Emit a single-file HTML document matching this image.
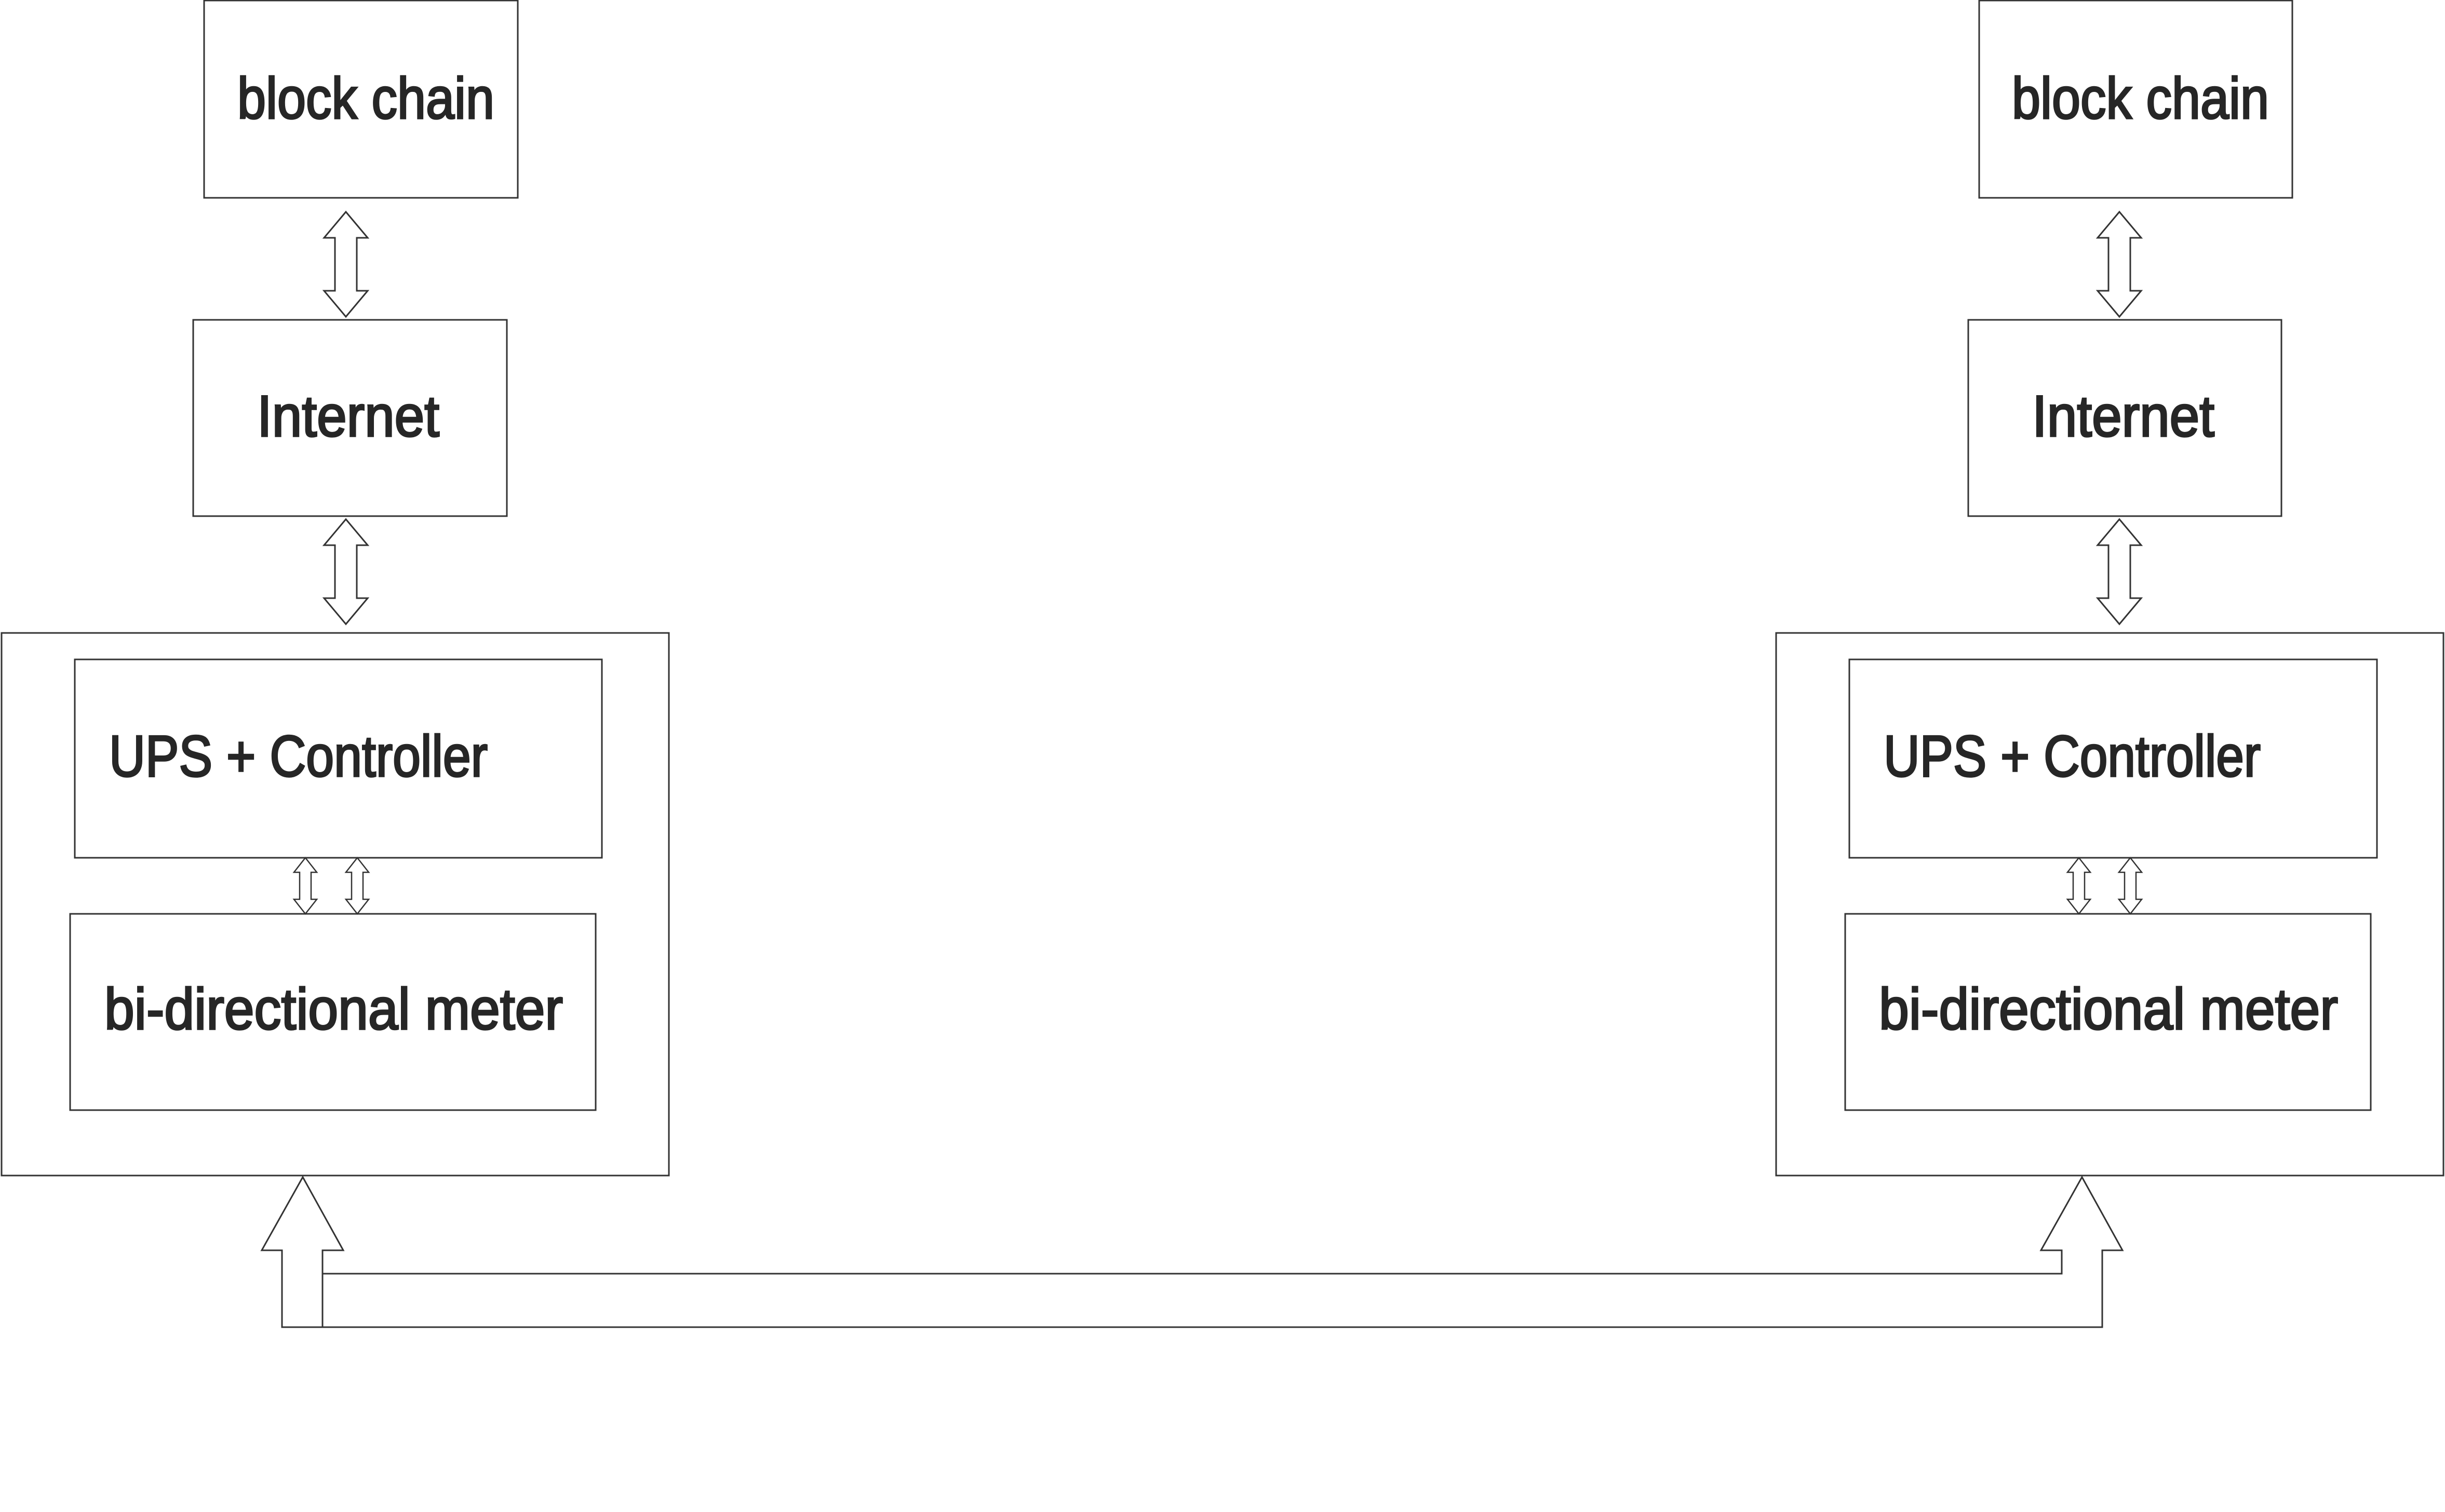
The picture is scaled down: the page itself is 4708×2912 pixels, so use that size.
<!DOCTYPE html>
<html><head><meta charset="utf-8"><style>html,body{margin:0;padding:0;background:#fff}svg{display:block}text{font-family:"Liberation Sans",sans-serif;fill:#262626;stroke:#262626;stroke-width:3.5px;font-size:112px}</style></head>
<body>
<svg width="4708" height="2912" viewBox="0 0 4708 2912" xmlns="http://www.w3.org/2000/svg">
<defs>
<g id="dbl">
<polygon points="0,0 42,50 21,50 21,152 42,152 0,202 -42,152 -21,152 -21,50 -42,50" fill="#fff" stroke="#333" stroke-width="3"/>
</g>
<g id="sm">
<polygon points="0,0 22,28 11,28 11,80 22,80 0,108 -22,80 -11,80 -11,28 -22,28" fill="#fff" stroke="#333" stroke-width="2.5"/>
</g>
</defs>
<g fill="none" stroke="#333" stroke-width="3">
<rect x="393" y="1" width="604" height="380"/>
<rect x="372" y="616" width="604" height="378"/>
<rect x="3" y="1219" width="1285" height="1045"/>
<rect x="144" y="1270" width="1015" height="382"/>
<rect x="135" y="1760" width="1012" height="378"/>
<rect x="3811" y="1" width="603" height="380"/>
<rect x="3790" y="616" width="603" height="378"/>
<rect x="3420" y="1219" width="1285" height="1045"/>
<rect x="3561" y="1270" width="1016" height="382"/>
<rect x="3553" y="1760" width="1012" height="378"/>
</g>
<use href="#dbl" x="666" y="408"/>
<use href="#dbl" x="666" y="1000"/>
<use href="#dbl" x="4081" y="408"/>
<use href="#dbl" x="4081" y="1000"/>
<use href="#sm" x="588" y="1652"/>
<use href="#sm" x="688" y="1652"/>
<use href="#sm" x="4003" y="1652"/>
<use href="#sm" x="4102" y="1652"/>
<polygon points="583,2267 661,2408 621,2408 621,2453 3970,2453 3970,2408 3930,2408 4009,2267 4087,2408 4048,2408 4048,2556 543,2556 543,2408 504,2408" fill="#fff" stroke="#333" stroke-width="3"/>
<line x1="621" y1="2453" x2="621" y2="2556" stroke="#333" stroke-width="3"/>
<text x="457" y="228" textLength="495" lengthAdjust="spacingAndGlyphs">block chain</text>
<text x="495" y="840" textLength="351" lengthAdjust="spacingAndGlyphs">Internet</text>
<text x="210" y="1495" textLength="729" lengthAdjust="spacingAndGlyphs">UPS + Controller</text>
<text x="201" y="1982" textLength="883" lengthAdjust="spacingAndGlyphs">bi-directional meter</text>
<text x="3874" y="228" textLength="495" lengthAdjust="spacingAndGlyphs">block chain</text>
<text x="3913" y="840" textLength="351" lengthAdjust="spacingAndGlyphs">Internet</text>
<text x="3627" y="1495" textLength="726" lengthAdjust="spacingAndGlyphs">UPS + Controller</text>
<text x="3618" y="1982" textLength="884" lengthAdjust="spacingAndGlyphs">bi-directional meter</text>
</svg>
</body></html>
